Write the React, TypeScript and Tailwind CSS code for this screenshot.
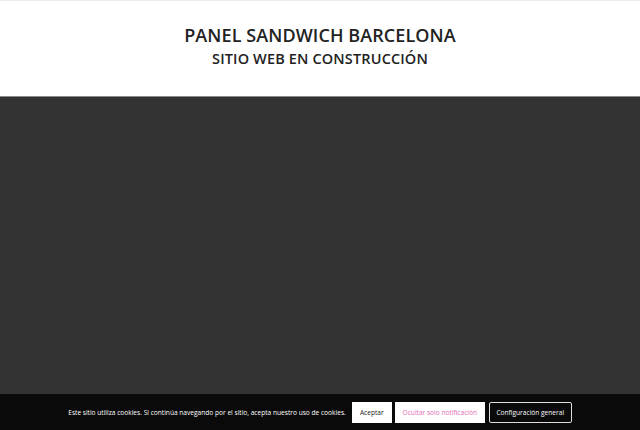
export default function App() {
  return (
    <div className="flex h-[430px] w-[640px] flex-col overflow-hidden bg-[#333333] font-['Open_Sans',sans-serif]">
      <header className="flex h-[97px] shrink-0 flex-col items-center border-t border-b border-t-[#ececec] border-b-[#8a8a8a] bg-white pt-[21px]">
        <h1 className="text-[18px] font-semibold leading-[26px] tracking-[0.005em] text-[#222]">
          PANEL SANDWICH BARCELONA
        </h1>
        <h2 className="text-[14.5px] font-semibold leading-[22px] tracking-[0.01em] text-[#222]">
          SITIO WEB EN CONSTRUCCIÓN
        </h2>
      </header>
      <main className="flex-1" />
      <div className="flex h-[36px] shrink-0 items-center justify-center gap-[3px] bg-[#0a0a0a] pt-[1px] text-[6.6px] font-medium">
        <p className="mr-[3px] text-white">
          Este sitio utiliza cookies. Si continúa navegando por el sitio, acepta nuestro uso de cookies.
        </p>
        <button className="h-[21px] w-[40px] bg-white text-[#222]">Aceptar</button>
        <button className="h-[21px] w-[90px] bg-white text-[#e26bb3]">Ocultar solo notificación</button>
        <button className="ml-[1px] h-[21px] w-[83px] rounded-[2px] border border-[#ddd] bg-[#0a0a0a] text-white">
          Configuración general
        </button>
      </div>
    </div>
  )
}
